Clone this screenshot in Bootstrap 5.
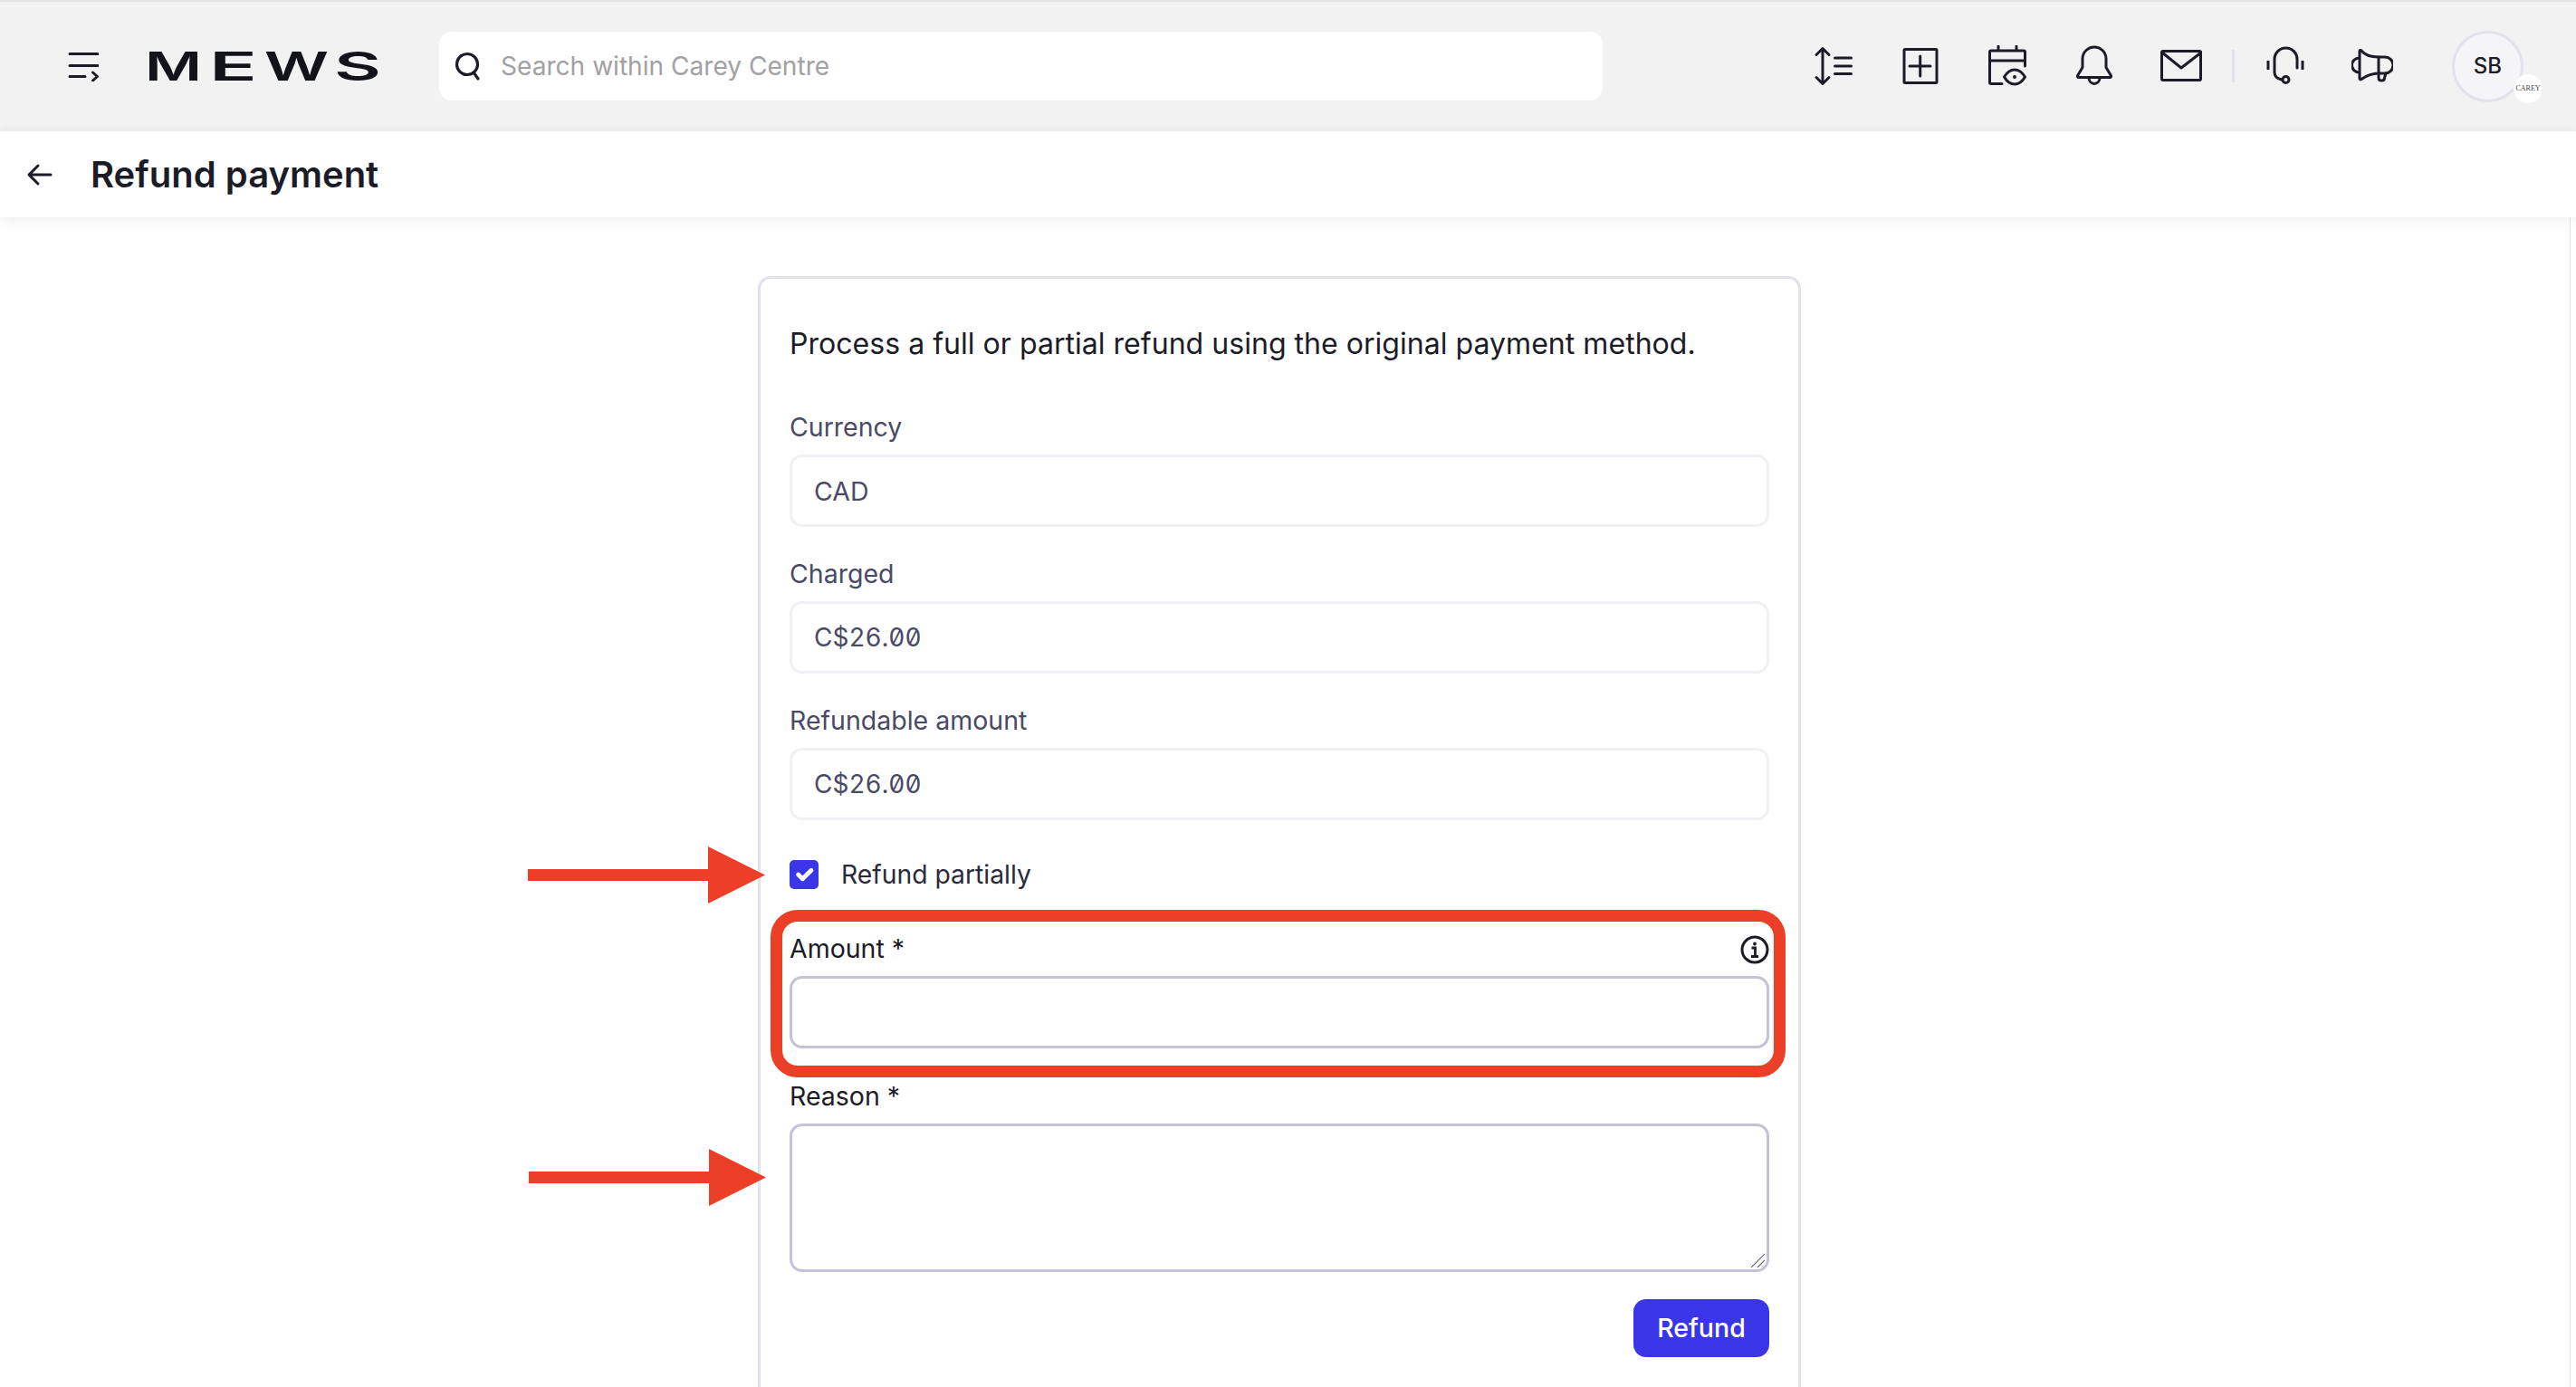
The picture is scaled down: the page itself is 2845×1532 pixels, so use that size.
<!doctype html>
<html lang="en">
<head>
<meta charset="utf-8">
<title>Refund payment</title>
<link href="https://cdn.jsdelivr.net/npm/bootstrap@5.3.0/dist/css/bootstrap.min.css" rel="stylesheet">
<style>
html,body{height:100%;overflow:hidden;background:#fff;}
body{font-family:Inter,"Liberation Sans",sans-serif;color:#1c1c28;position:relative;}
.topbar{height:145px;background:#f2f2f2;border-top:2px solid #e3e3e6;padding:0 58px 1px 75px;}
.menu-ic{width:34px;height:34px;flex:none;}
.wordmark-box{width:257px;height:34px;margin-left:55px;flex:none;overflow:visible;}
.searchbox{width:1285px;height:76px;margin-left:64px;background:#fff;border-radius:14px;padding-left:16px;flex:none;}
.searchbox svg{width:34px;height:34px;flex:none;}
.searchbox input{border:0;outline:0;background:transparent;font-size:28.1px;padding:0 0 0 18px;width:100%;color:#1c1c28;font-family:inherit;}
.searchbox input::placeholder{color:#a1a1a3;opacity:1;}
.tool-ic{width:46px;height:46px;flex:none;}
.tools{gap:50px;}
.vsep{width:3px;height:36px;background:#e1e1ea;margin:0 -17px;}
.avatar{width:79px;height:79px;border:3px solid #e2e2ec;background:#f5f5f8;border-radius:50%;font-size:24px;font-weight:500;margin-left:15px;}
.org-badge{position:absolute;right:-24px;bottom:-4px;width:32px;height:32px;border-radius:50%;background:#fff;font-size:8px;color:#444;font-family:"Liberation Serif",serif;}
.subbar{height:95px;background:#fff;box-shadow:0 2px 14px rgba(30,30,50,.09);position:relative;z-index:2;padding-left:29px;}
.subbar svg{width:30px;height:30px;flex:none;}
.subbar h1{font-size:40px;font-weight:600;margin:0 0 0 41px;color:#1c1c28;}
.scrolltrack{position:absolute;top:240px;right:6px;bottom:0;width:1px;background:#e6e6ea;}
.formcard{width:1152px;margin:65px auto 0 837px;border:3px solid #e2e2ec;border-bottom:0;border-radius:14px 14px 0 0;padding:49px 32px 0 32px;height:1300px;}
.intro{font-size:32.1px;line-height:46px;margin:0 0 49px;color:#1c1c28;}
.fieldlbl{font-size:28.5px;line-height:40px;color:#4a4a66;margin:0 0 10px;display:block;}
.fieldlbl.on{color:#1c1c28;}
.formcard .form-control{height:80px;border:3px solid #f0f0f5;border-radius:14px;background:#fff;font-size:28.5px;color:#4a4a66;padding:0 24px;box-shadow:none;font-family:inherit;}
.formcard .form-control.mono{font-variant-numeric:tabular-nums slashed-zero;font-feature-settings:"tnum","zero";font-size:28px;}
.formcard .form-control.edit{border-color:#c4c2d6;}
.formcard textarea.form-control.edit{height:164px;resize:none;}
.fieldwrap{margin-bottom:32px;}
.checkrow{margin:40px 0 0;height:40px;gap:25px;}
.checkrow .form-check-input{width:32px;height:32px;margin:0;border:0;border-radius:5px;background-color:#3a36e8;background-size:100%;flex:none;}
.checkrow .form-check-label{font-size:28.3px;color:#2a2a3a;}
.amountblock{margin-top:42px;}
.reasonblock{margin-top:33px;}
.info-ic{width:32px;height:32px;}
.refundbtn{background:#3a36e8;border:0;color:#fff;font-size:28.5px;font-weight:500;border-radius:14px;width:150px;height:64px;padding:0;}
.refundrow{margin-top:30px;}
.grip{position:absolute;right:5px;bottom:5px;width:15px;height:15px;}
.annot{position:absolute;z-index:5;pointer-events:none;}
.redframe{left:851px;top:1005px;width:1121px;height:185px;border:13px solid #eb4027;border-radius:30px;}
.arrow-one{left:583px;top:935px;}
.arrow-two{left:584px;top:1269px;}
</style>
</head>
<body>
<header class="topbar d-flex align-items-center">
  <svg class="menu-ic" viewBox="0 0 34 34" fill="none" stroke="#1c1c28" stroke-width="3" stroke-linecap="round" stroke-linejoin="round"><path d="M2 3.500h31M2 16.500h31M2 28.500h17"/><path d="M27.500 24l5 4.500-5 4.500"/></svg>
  <svg class="wordmark-box" viewBox="0 0 257 34" role="img" aria-label="MEWS"><text y="33" font-family="Inter,'Liberation Sans',sans-serif" font-size="44" font-weight="600" fill="#13131a"><tspan x="-4" textLength="63" lengthAdjust="spacingAndGlyphs">M</tspan><tspan x="67" textLength="53" lengthAdjust="spacingAndGlyphs">E</tspan><tspan x="128" textLength="71" lengthAdjust="spacingAndGlyphs">W</tspan><tspan x="205" textLength="52" lengthAdjust="spacingAndGlyphs">S</tspan></text></svg>
  <div class="searchbox d-flex align-items-center">
    <svg viewBox="0 0 34 34" fill="none" stroke="#1c1c28" stroke-width="3.200" stroke-linecap="round"><circle cx="15" cy="15" r="11.500"/><path d="M22 24l5 7"/></svg>
    <input type="text" placeholder="Search within Carey Centre" aria-label="Search">
  </div>
  <div class="tools d-flex align-items-center ms-auto">
    <svg class="tool-ic" viewBox="0 0 46 46" fill="none" stroke="#1c1c28" stroke-width="3" stroke-linecap="round" stroke-linejoin="round"><path d="M11 4v38M4 10.500L11 3.500l7 7M4 35.500l7 7 7-7"/><path d="M24.500 14h18M24.500 23h18M24.500 31.500h18"/></svg>
    <svg class="tool-ic" viewBox="0 0 46 46" fill="none" stroke="#1c1c28" stroke-width="3" stroke-linecap="round" stroke-linejoin="round"><rect x="5" y="4.500" width="36" height="37" rx="1"/><path d="M22.700 12v22M11 23h23"/></svg>
    <svg class="tool-ic" viewBox="0 0 46 46" fill="none" stroke="#1c1c28" stroke-width="3" stroke-linecap="round" stroke-linejoin="round"><path d="M17 42.500H5a1.500 1.500 0 0 1-1.500-1.500V7.500A1.500 1.500 0 0 1 5 6h36a1.500 1.500 0 0 1 1.500 1.500V23M3.500 17h39M13 1v5M33 1v5"/><path d="M19.500 35c3-5 7-8 11.500-8s8.500 3 11.500 8c-3 5-7 8-11.500 8s-8.500-3-11.500-8z"/><circle cx="31" cy="35" r="2" fill="#1c1c28" stroke="none"/></svg>
    <svg class="tool-ic" viewBox="0 0 46 46" fill="none" stroke="#1c1c28" stroke-width="3" stroke-linecap="round" stroke-linejoin="round"><path d="M6 35.500h34c1.500 0 2-1.200 1.300-2.300L36 24.500V15a13 13 0 0 0-26 0v9.500l-5.300 8.700c-.7 1.100-.2 2.300 1.300 2.300z"/><path d="M17 36c0 8.500 12 8.500 12 0"/></svg>
    <svg class="tool-ic" viewBox="0 0 46 46" fill="none" stroke="#1c1c28" stroke-width="3" stroke-linecap="round" stroke-linejoin="round"><rect x="1.500" y="6.500" width="43" height="32" rx="1.500"/><path d="M2 8l21 17L45 8"/></svg>
    <div class="vsep"></div>
    <svg class="tool-ic" viewBox="0 0 46 46" fill="none" stroke="#1c1c28" stroke-width="3" stroke-linecap="round" stroke-linejoin="round"><path d="M36 25V15.500a12.500 12.500 0 0 0-25 0V30c0 4 3 7 8 8"/><circle cx="23.500" cy="38" r="3.500"/><path d="M4 17v10M42 17v10" stroke-linecap="butt"/></svg>
    <svg class="tool-ic" viewBox="0 0 46 46" fill="none" stroke="#1c1c28" stroke-width="3" stroke-linecap="round" stroke-linejoin="round"><path d="M9 6.500V36.500c0 1.200 1 1.700 2 1 5-3.500 11-6.500 19-6.500h7a9 9 0 0 0 0-18h-7C22 13 15 11 11 6c-.8-1-2-.700-2 .5z"/><path d="M8.500 14a8 8 0 0 0 0 16M30 13v23c0 4 6.500 4 6.500 0l1.500-5"/></svg>
    <div class="avatar position-relative d-flex align-items-center justify-content-center">SB<span class="org-badge d-flex align-items-center justify-content-center">CAREY</span></div>
  </div>
</header>
<div class="subbar d-flex align-items-center">
  <svg viewBox="0 0 30 30" fill="none" stroke="#1c1c28" stroke-width="3" stroke-linecap="round" stroke-linejoin="round"><path d="M27 15H4M13 5L3 15l10 10"/></svg>
  <h1>Refund payment</h1>
</div>
<div class="scrolltrack"></div>
<main class="formcard">
  <p class="intro">Process a full or partial refund using the original payment method.</p>
  <div class="fieldwrap"><label class="fieldlbl" for="cur">Currency</label><input id="cur" class="form-control" value="CAD" readonly></div>
  <div class="fieldwrap"><label class="fieldlbl" for="chg">Charged</label><input id="chg" class="form-control mono" value="C$26.00" readonly></div>
  <div class="fieldwrap"><label class="fieldlbl" for="rfd">Refundable amount</label><input id="rfd" class="form-control mono" value="C$26.00" readonly></div>
  <div class="checkrow form-check d-flex align-items-center p-0">
    <input id="part" class="form-check-input" type="checkbox" checked>
    <label class="form-check-label" for="part">Refund partially</label>
  </div>
  <div class="amountblock">
    <div class="d-flex justify-content-between align-items-center"><label class="fieldlbl on" for="amt">Amount *</label>
      <svg class="info-ic mb-2" viewBox="0 0 32 32" fill="none" stroke="#1c1c28" stroke-width="3"><circle cx="16" cy="16" r="14"/><circle cx="16" cy="9.500" r="1.900" fill="#1c1c28" stroke="none"/><path d="M12.500 14h4v9M12 23.500h8" stroke-width="2.800"/></svg>
    </div>
    <input id="amt" class="form-control edit">
  </div>
  <div class="reasonblock">
    <label class="fieldlbl on" for="rsn">Reason *</label>
    <div class="position-relative">
      <textarea id="rsn" class="form-control edit"></textarea>
      <svg class="grip" viewBox="0 0 15 15" fill="none" stroke="#666" stroke-width="1.200"><path d="M0 15L15 0M7 15l8-8"/></svg>
    </div>
  </div>
  <div class="refundrow d-flex justify-content-end"><button type="button" class="btn refundbtn">Refund</button></div>
</main>
<div class="annot redframe"></div>
<svg class="annot arrow-one" width="262" height="63" viewBox="0 0 262 63" fill="#eb4027"><path d="M0 25h199V0l63 31.500-63 31.500V38H0z"/></svg>
<svg class="annot arrow-two" width="262" height="63" viewBox="0 0 262 63" fill="#eb4027"><path d="M0 25h199V0l63 31.500-63 31.500V38H0z"/></svg>
<script src="https://cdn.jsdelivr.net/npm/bootstrap@5.3.0/dist/js/bootstrap.bundle.min.js"></script>
</body>
</html>
